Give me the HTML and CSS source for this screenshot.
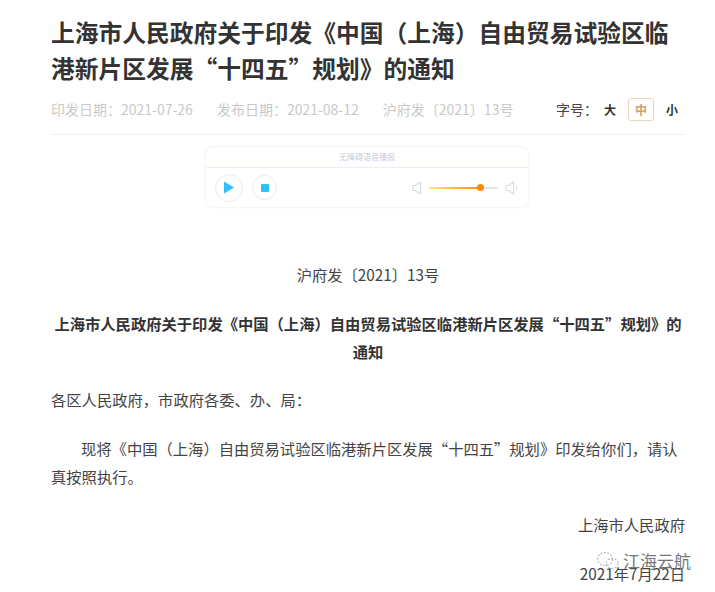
FILE: index.html
```html
<!DOCTYPE html>
<html lang="zh-CN">
<head>
<meta charset="UTF-8">
<title>通知</title>
<link rel="stylesheet" href="styles.css">
</head>
<body>
<div class="page">
    <h1 class="title">上海市人民政府关于印发《中国（上海）自由贸易试验区临港新片区发展“十四五”规划》的通知</h1>
    <div class="meta">
        <div class="dates">
            <span>印发日期：2021-07-26</span>
            <span>发布日期：2021-08-12</span>
            <span>沪府发〔2021〕13号</span>
        </div>
        <div class="font-size">
            <span class="fs-label">字号：</span>
            <span class="fs-btn">大</span>
            <span class="fs-btn active">中</span>
            <span class="fs-btn">小</span>
        </div>
    </div>
    <div class="player">
        <div class="player-head">无障碍语音播报</div>
        <div class="player-body">
            <div class="controls">
                <span class="ctrl ctrl-play">
                    <svg width="12" height="13" viewBox="0 0 12 13"><path d="M1 .5 L11 6.5 L1 12.5 Z" fill="#2fc1fb"/></svg>
                </span>
                <span class="ctrl ctrl-stop"><i class="stop-mark"></i></span>
            </div>
            <div class="volume">
                <svg width="10" height="14" viewBox="0 0 10 14"><path d="M1 4.5 H3.5 L8.5 1 V13 L3.5 9.5 H1 Z" fill="none" stroke="#d8dde6" stroke-width="1.2"/></svg>
                <div class="track"><div class="track-fill"><i class="knob"></i></div></div>
                <svg width="15" height="14" viewBox="0 0 15 14"><path d="M1 4.5 H3.5 L8.5 1 V13 L3.5 9.5 H1 Z M11 5 Q12.5 7 11 9" fill="none" stroke="#d8dde6" stroke-width="1.2"/></svg>
            </div>
        </div>
    </div>
    <div class="content">
        <p class="center">沪府发〔2021〕13号</p>
        <p class="center doc-title">上海市人民政府关于印发《中国（上海）自由贸易试验区临港新片区发展“十四五”规划》的通知</p>
        <p>各区人民政府，市政府各委、办、局：</p>
        <p class="indent">现将《中国（上海）自由贸易试验区临港新片区发展“十四五”规划》印发给你们，请认真按照执行。</p>
        <p class="right">上海市人民政府</p>
        <p class="right">2021年7月22日</p>
    </div>
</div>
<div class="watermark">
    <svg width="24" height="20" viewBox="0 0 24 20"><g fill="none" stroke="#b9b9b9" stroke-width="1.2" stroke-dasharray="2 1.5"><ellipse cx="9" cy="8" rx="7.5" ry="6.5"/><ellipse cx="16" cy="12.5" rx="6" ry="5"/></g></svg>
    <span>江海云航</span>
</div>
</body>
</html>
```

FILE: styles.css
```css
html, body {
    margin: 0;
    height: 100%;
    overflow: hidden;
}

body {
    background-color: #ffffff;
    font-family: "Noto Sans CJK SC", "Liberation Sans", sans-serif;
    color: #444444;
    position: relative;
}

.page {
    width: 634px;
    padding: 14px 0 0 51px;
}

.title {
    margin: 0;
    font-size: 23.75px;
    line-height: 36px;
    font-weight: bold;
    color: #333333;
}

.meta {
    display: flex;
    justify-content: space-between;
    align-items: center;
    height: 40px;
    margin-top: 3px;
    padding-bottom: 5px;
    border-bottom: 1px solid #f0f0f0;
    font-size: 14px;
}

.dates {
    display: flex;
    gap: 24px;
    color: #c9c9c9;
}

.font-size {
    display: flex;
    align-items: center;
    color: #444444;
}

.fs-label {
    margin-right: -6px;
}

.fs-btn {
    width: 26px;
    height: 23px;
    line-height: 23px;
    text-align: center;
    font-size: 12px;
    font-weight: bold;
    color: #333333;
    margin-left: 5px;
    box-sizing: border-box;
}

.fs-btn.active {
    color: #c9a368;
    border: 1px solid #e6d5b8;
    border-radius: 3px;
    line-height: 21px;
}

.player {
    width: 322px;
    margin: 12px 0 0 155px;
    border-radius: 7px;
    box-shadow: 0 0 3px #dfe4ee;
    background-color: #ffffff;
}

.player-head {
    height: 20px;
    line-height: 20px;
    text-align: center;
    font-size: 8px;
    color: #c9cdd8;
    border-bottom: 1px solid #e8effa;
}

.player-body {
    display: flex;
    justify-content: space-between;
    align-items: center;
    height: 39px;
    padding: 0 8px 0 9px;
}

.controls {
    display: flex;
    align-items: center;
    gap: 9px;
}

.ctrl {
    display: flex;
    align-items: center;
    justify-content: center;
    border: 1px solid #e6ebf5;
    border-radius: 50%;
    box-sizing: border-box;
}

.ctrl-play {
    width: 28px;
    height: 28px;
}

.ctrl-stop {
    width: 25px;
    height: 25px;
}

.stop-mark {
    width: 8px;
    height: 8px;
    border-radius: 1px;
    background-color: #2fc1fb;
}

.volume {
    display: flex;
    align-items: center;
    gap: 7px;
}

.track {
    width: 69px;
    height: 2px;
    background-color: #e6e8f0;
}

.track-fill {
    position: relative;
    width: 52px;
    height: 2px;
    background: linear-gradient(to right, #ffe680, #ff8a00);
}

.knob {
    position: absolute;
    right: -3px;
    top: -3px;
    width: 7px;
    height: 7px;
    border-radius: 50%;
    background-color: #ff8a00;
}

.content {
    margin-top: 53px;
    font-size: 15.3px;
    line-height: 28px;
}

.content p {
    margin: 0 0 20.5px;
}

.center {
    text-align: center;
}

.doc-title {
    font-weight: bold;
    color: #333333;
}

.indent {
    text-indent: 30px;
}

.right {
    text-align: right;
}

.watermark {
    position: absolute;
    left: 596px;
    top: 549px;
    display: flex;
    align-items: center;
    gap: 3px;
    font-size: 17px;
    line-height: 24px;
    color: #777777;
}
```
